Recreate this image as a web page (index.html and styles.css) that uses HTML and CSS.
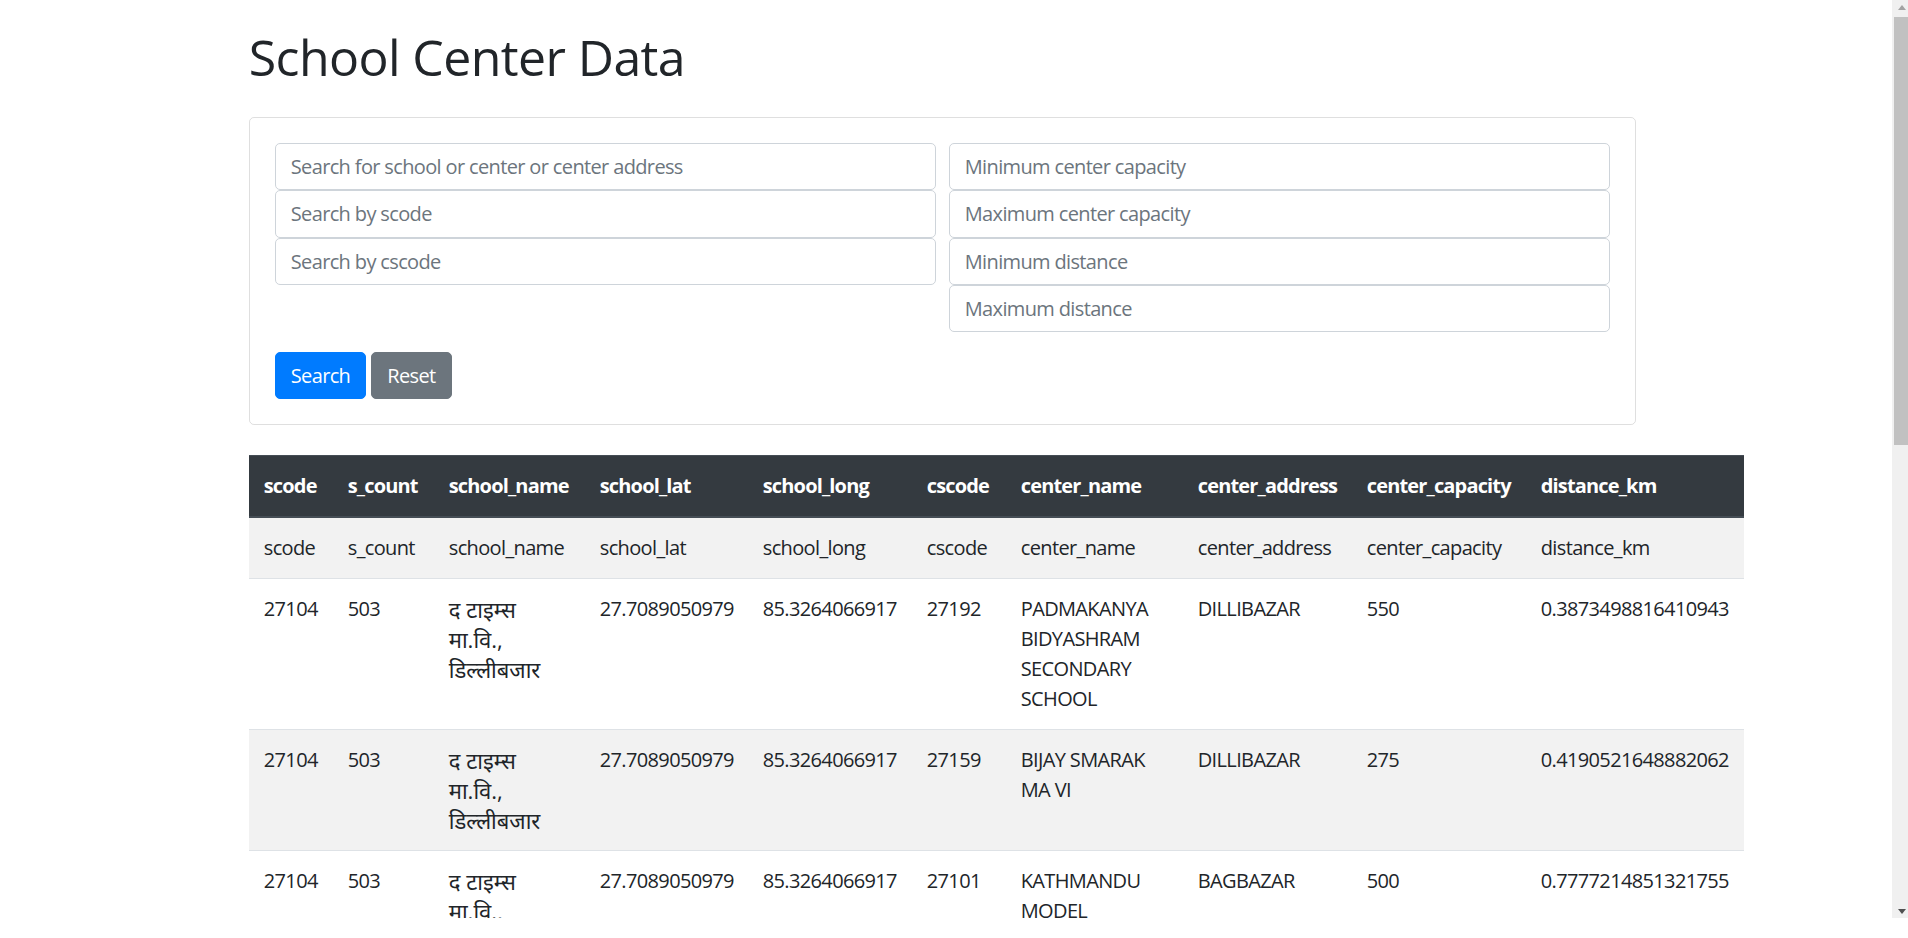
FILE: index.html
```html
<!DOCTYPE html>
<html lang="en">
<head>
<meta charset="utf-8">
<title>School Center Data</title>
<link rel="stylesheet" href="styles.css">
</head>
<body>
<div class="window">
  <div class="viewport">
    <div class="container">
      <h1 class="title">School Center Data</h1>
      <div class="card">
        <form class="filters">
          <div class="filter-grid">
            <div class="filter-col">
              <input class="field" type="text" placeholder="Search for school or center or center address">
              <input class="field" type="text" placeholder="Search by scode">
              <input class="field" type="text" placeholder="Search by cscode">
            </div>
            <div class="filter-col">
              <input class="field" type="text" placeholder="Minimum center capacity">
              <input class="field" type="text" placeholder="Maximum center capacity">
              <input class="field" type="text" placeholder="Minimum distance">
              <input class="field" type="text" placeholder="Maximum distance">
            </div>
          </div>
          <div class="actions">
            <button class="btn btn-primary" type="button">Search</button>
            <button class="btn btn-secondary" type="button">Reset</button>
          </div>
        </form>
      </div>
      <table class="data-table">
        <colgroup>
          <col class="c-scode"><col class="c-count"><col class="c-sname"><col class="c-lat"><col class="c-long">
          <col class="c-cscode"><col class="c-cname"><col class="c-caddr"><col class="c-ccap"><col class="c-dist">
        </colgroup>
        <thead>
          <tr>
            <th>scode</th><th>s_count</th><th>school_name</th><th>school_lat</th><th>school_long</th>
            <th>cscode</th><th>center_name</th><th>center_address</th><th>center_capacity</th><th>distance_km</th>
          </tr>
        </thead>
        <tbody>
          <tr>
            <td>scode</td><td>s_count</td><td>school_name</td><td>school_lat</td><td>school_long</td>
            <td>cscode</td><td>center_name</td><td>center_address</td><td>center_capacity</td><td>distance_km</td>
          </tr>
          <tr>
            <td>27104</td><td>503</td><td class="deva">द टाइम्स मा.वि., डिल्लीबजार</td><td>27.7089050979</td><td>85.3264066917</td>
            <td>27192</td><td>PADMAKANYA BIDYASHRAM SECONDARY SCHOOL</td><td>DILLIBAZAR</td><td>550</td><td>0.3873498816410943</td>
          </tr>
          <tr>
            <td>27104</td><td>503</td><td class="deva">द टाइम्स मा.वि., डिल्लीबजार</td><td>27.7089050979</td><td>85.3264066917</td>
            <td>27159</td><td>BIJAY SMARAK MA VI</td><td>DILLIBAZAR</td><td>275</td><td>0.4190521648882062</td>
          </tr>
          <tr>
            <td>27104</td><td>503</td><td class="deva">द टाइम्स मा.वि., डिल्लीबजार</td><td>27.7089050979</td><td>85.3264066917</td>
            <td>27101</td><td>KATHMANDU MODEL SECONDARY SCHOOL</td><td>BAGBAZAR</td><td>500</td><td>0.7777214851321755</td>
          </tr>
        </tbody>
      </table>
    </div>
  </div>
  <div class="scrollbar" aria-hidden="true">
    <span class="sb-button"><span class="sb-arrow sb-arrow-up"></span></span>
    <span class="sb-track"><span class="sb-thumb"></span></span>
    <span class="sb-button sb-button-down"><span class="sb-arrow sb-arrow-down"></span></span>
  </div>
</div>
</body>
</html>
```

FILE: styles.css
```css
* {
  box-sizing: border-box;
}

html,
body {
  background: #fff;
}

body {
  margin: 0;
  font-family: "Open Sans", "Noto Sans Devanagari", "Lohit Devanagari", "Noto Sans", "DejaVu Sans", sans-serif;
  font-size: 20px;
  line-height: 1.5;
  letter-spacing: -0.032em;
  color: #212529;
}

.window {
  display: flex;
  height: 918px;
}

.viewport {
  flex: 1;
  min-width: 0;
  overflow: hidden;
}

/* window scrollbar */
.scrollbar {
  width: 16px;
  flex: none;
  display: flex;
  flex-direction: column;
  background: #f0f0f0;
}

.sb-button {
  height: 17px;
  flex: none;
  display: flex;
  justify-content: center;
  align-items: center;
  padding-left: 3px;
}

.sb-arrow {
  width: 0;
  height: 0;
  border-left: 4.5px solid transparent;
  border-right: 4.5px solid transparent;
}

.sb-arrow-up {
  border-bottom: 5px solid #a3a3a3;
  margin-top: -2px;
}

.sb-arrow-down {
  border-top: 5px solid #505050;
  margin-top: 3px;
}

.sb-track {
  flex: 1;
  padding-left: 2px;
}

.sb-thumb {
  display: block;
  height: 428px;
  background: #c1c1c1;
}

.container {
  width: 1425px;
  margin-left: 230px;
  padding: 0 18.75px;
}

.title {
  margin: 0 0 30px;
  padding-top: 27px;
  font-size: 50px;
  line-height: 60px;
  font-weight: 400;
  letter-spacing: -0.012em;
}

.card {
  border: 1px solid rgba(0, 0, 0, 0.125);
  border-radius: 5px;
  padding: 25px;
  margin-bottom: 30px;
}

.filter-grid {
  display: grid;
  grid-template-columns: 1fr 1fr;
  column-gap: 12.5px;
  align-items: start;
}

.field {
  display: block;
  width: 100%;
  height: 47.25px;
  padding: 7.5px 15px;
  font-family: inherit;
  font-size: 20px;
  line-height: 1.5;
  letter-spacing: -0.032em;
  color: #495057;
  background: #fff;
  border: 1px solid #ced4da;
  border-radius: 5px;
  outline: none;
}

.field::placeholder {
  color: #6c757d;
  opacity: 1;
}

.actions {
  display: flex;
  gap: 5px;
  margin-top: 20px;
}

.btn {
  font-family: inherit;
  font-size: 20px;
  line-height: 1.5;
  letter-spacing: -0.032em;
  padding: 7.5px 15px;
  border: 1px solid transparent;
  border-radius: 5px;
  color: #fff;
  cursor: pointer;
}

.btn-primary {
  background: #007bff;
  border-color: #007bff;
}

.btn-secondary {
  background: #6c757d;
  border-color: #6c757d;
}

.data-table {
  width: 1495px;
  table-layout: fixed;
  border-collapse: collapse;
  margin-bottom: 20px;
}

.c-scode { width: 84px; }
.c-count { width: 101px; }
.c-sname { width: 151px; }
.c-lat { width: 163px; }
.c-long { width: 164px; }
.c-cscode { width: 94px; }
.c-cname { width: 177px; }
.c-caddr { width: 169px; }
.c-ccap { width: 174px; }
.c-dist { width: 218px; }

.data-table th,
.data-table td {
  padding: 15px;
  text-align: left;
  vertical-align: top;
  border-top: 1px solid #dee2e6;
}

.data-table thead th {
  background: #343a40;
  color: #fff;
  font-weight: 700;
  letter-spacing: -0.042em;
  border-top-color: #454d55;
  border-bottom: 2px solid #454d55;
}

.data-table tbody tr:nth-child(odd) {
  background: #f2f2f2;
}

.data-table td.deva {
  font-size: 22px;
  line-height: 30px;
  letter-spacing: 0;
  padding-right: 24px;
}
```
